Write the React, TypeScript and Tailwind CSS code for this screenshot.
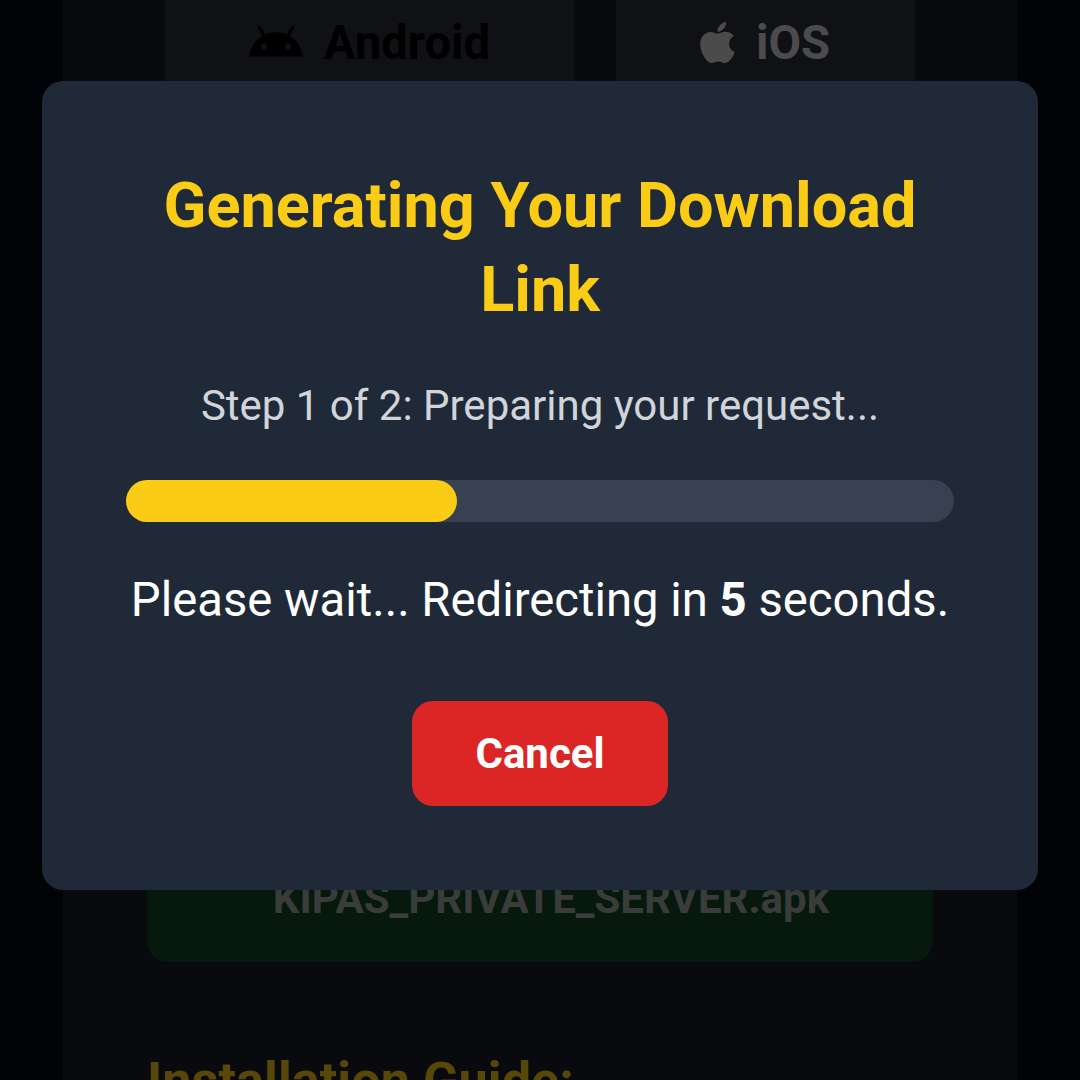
import { FaApple } from "react-icons/fa";

function AndroidHead({ className }: { className?: string }) {
  return (
    <svg className={className} viewBox="0 0 24 24" fill="currentColor">
      <path d="M17.6 9.48l1.84-3.18c.16-.31.04-.69-.26-.85-.29-.15-.65-.06-.83.22l-1.88 3.24c-2.86-1.21-6.08-1.21-8.94 0L5.65 5.67c-.19-.29-.58-.38-.87-.2-.28.18-.37.54-.22.83L6.4 9.48C3.3 11.25 1.28 14.44 1 18h22c-.28-3.56-2.3-6.75-5.4-8.52zM7 15.25c-.69 0-1.25-.56-1.25-1.25s.56-1.25 1.25-1.25 1.25.56 1.25 1.25-.56 1.25-1.25 1.25zm10 0c-.69 0-1.25-.56-1.25-1.25s.56-1.25 1.25-1.25 1.25.56 1.25 1.25-.56 1.25-1.25 1.25z" />
    </svg>
  );
}

export default function App() {
  return (
    <div className="relative h-[1080px] w-[1080px] overflow-hidden bg-[#020306] font-['Roboto',sans-serif]">
      {/* Page behind the dialog */}
      <div className="mx-auto h-full w-[954px] bg-[#080a0e] px-[84px]">
        <div className="flex justify-center gap-[42px]">
          <div className="flex h-[84px] w-[409px] items-center justify-center gap-[19px] bg-[#0f1115] pr-[2px] text-[47.25px] font-bold text-black">
            <AndroidHead className="h-[58px] w-[58px]" />
            <span className="mt-[2px]">Android</span>
          </div>
          <div className="flex h-[84px] w-[299px] items-center justify-center gap-[15px] bg-[#0f1115] pr-[7px] text-[47.25px] font-bold text-[#4b4b4c]">
            <FaApple className="h-[47px] w-[47px]" />
            <span className="mt-[2px]">iOS</span>
          </div>
        </div>
        <div className="mt-[700px] flex h-[178px] items-end justify-center rounded-[21px] bg-[#06190c] pb-[32px] pl-[22px] text-[42px] font-bold text-[#3a3c3b]">
          KIPAS_PRIVATE_SERVER.apk
        </div>
        <h2 className="mt-[81px] text-[52.25px] font-bold text-[#574709]">Installation Guide:</h2>
      </div>

      {/* Dialog */}
      <div className="absolute left-[42px] top-[81px] flex h-[809px] w-[996px] flex-col items-center rounded-[21px] bg-[#1f2937] px-[84px] pt-[83px]">
        <h1 className="text-center text-[63px] font-bold leading-[84px] text-[#facc15]">
          Generating Your Download Link
        </h1>
        <p className="mt-[42px] text-[42px] leading-[63px] text-[#d1d5db]">Step 1 of 2: Preparing your request...</p>
        <div className="mt-[43px] h-[42px] w-full rounded-full bg-[#374151]">
          <div className="h-full w-[40%] rounded-full bg-[#facc15]" />
        </div>
        <p className="mt-[42px] whitespace-nowrap text-[47.25px] leading-[73px] text-white">
          Please wait... Redirecting in <span className="font-bold">5</span> seconds.
        </p>
        <button className="mt-[64px] flex h-[105px] w-[256px] items-center justify-center rounded-[21px] bg-[#dc2626] text-[42px] font-bold text-white">
          Cancel
        </button>
      </div>
    </div>
  );
}
